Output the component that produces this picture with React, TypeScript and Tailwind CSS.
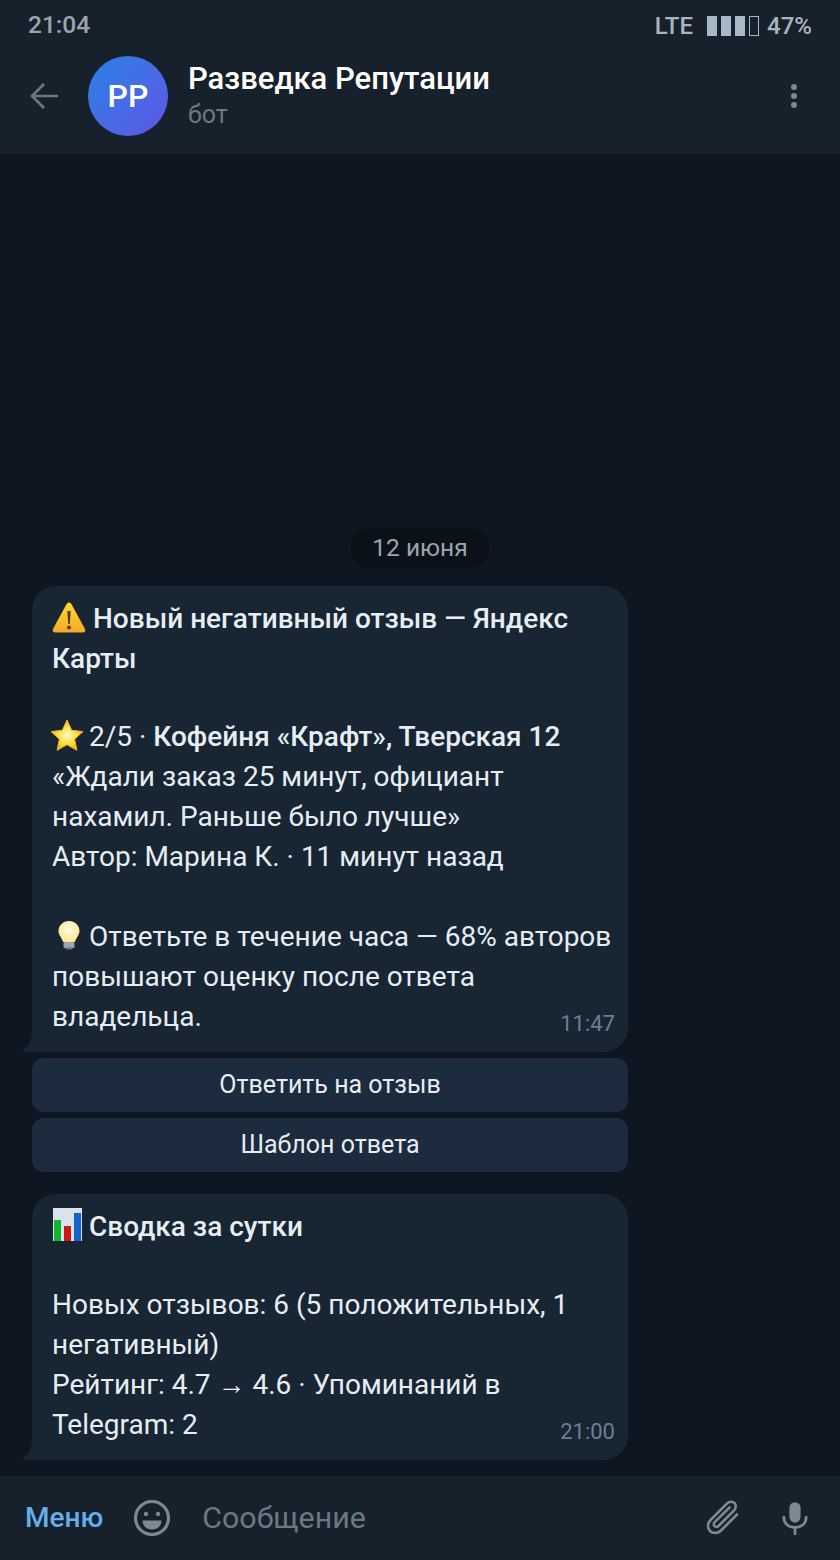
import React from "react";

const Warn = () => (
  <svg viewBox="0 0 34 32" className="inline-block w-[34px] h-[32px] align-[-5px] mr-[7px]">
    <defs>
      <linearGradient id="w" x1="0" y1="0" x2="0" y2="1">
        <stop offset="0" stopColor="#fdd835" />
        <stop offset="1" stopColor="#f9a825" />
      </linearGradient>
    </defs>
    <path d="M17 1.500c1 0 1.800.6 2.400 1.600l13.600 25c.9 1.800-.2 3.400-2 3.400H3c-1.800 0-2.900-1.600-2-3.400l13.600-25C15.200 2.100 16 1.500 17 1.500z" fill="url(#w)" />
    <path d="M15.400 10h3.200l-.8 13h-1.600z" fill="#4a3a1a" />
    <circle cx="17" cy="26.500" r="1.900" fill="#4a3a1a" />
  </svg>
);

const Star = () => (
  <svg viewBox="0 0 34 32" className="inline-block w-[34px] h-[32px] align-[-5px] ml-[-2px] mr-[5px]">
    <defs>
      <radialGradient id="s" cx="0.5" cy="0.5" r="0.6">
        <stop offset="0" stopColor="#fff9c4" />
        <stop offset="0.55" stopColor="#fdd835" />
        <stop offset="1" stopColor="#f59e0b" />
      </radialGradient>
    </defs>
    <path d="M17 1l4.700 10.300 11.300 1.300-8.400 7.600 2.300 11.100L17 25.700 7.100 31.300l2.300-11.100L1 12.600l11.300-1.300z" fill="url(#s)" stroke="#f9b020" strokeWidth="1" strokeLinejoin="round" />
  </svg>
);

const Bulb = () => (
  <svg viewBox="0 0 24 30" className="inline-block w-[24px] h-[30px] align-[-4px] ml-[5px] mr-[8px]">
    <defs>
      <radialGradient id="b" cx="0.5" cy="0.4" r="0.6">
        <stop offset="0" stopColor="#fffde7" />
        <stop offset="1" stopColor="#fde68a" />
      </radialGradient>
    </defs>
    <path d="M12 1C5.900 1 1.500 5.500 1.500 11c0 4.500 3.500 6.800 4.500 11h12c1-4.200 4.500-6.500 4.500-11C22.500 5.500 18.100 1 12 1z" fill="url(#b)" />
    <rect x="6.500" y="22" width="11" height="6" rx="1.500" fill="#9ca3af" />
    <rect x="8.500" y="27.500" width="7" height="2" rx="1" fill="#6b7280" />
  </svg>
);

const Chart = () => (
  <svg viewBox="0 0 29 33" className="inline-block w-[29px] h-[33px] align-[-5px] ml-[1px] mr-[7px]">
    <rect width="29" height="33" fill="#d9e4ea" />
    <rect x="1" y="12" width="7" height="21" fill="#12b52e" />
    <rect x="11" y="18" width="7" height="15" fill="#d11616" />
    <rect x="21" y="5" width="7" height="28" fill="#1565c8" />
  </svg>
);

const Tail = () => (
  <svg viewBox="0 0 14 18" className="absolute left-[-10px] bottom-0 w-[14px] h-[18px]">
    <path d="M14 0v18H2c-1.500 0-2-1-1-2C6 13 9 8 10 0z" fill="#182533" />
  </svg>
);

const Bubble = ({ time, children }: { time: string; children: React.ReactNode }) => (
  <div className="relative w-[596px] bg-[#182533] rounded-[24px] rounded-bl-none pt-[13px] pb-[15px] pl-[20px] pr-[16px] text-[28px] leading-[40px] text-[#e6edf3]">
    {children}
    <span className="absolute right-[13px] bottom-[15px] text-[22px] leading-[26px] text-[#6d7f8f]">{time}</span>
    <Tail />
  </div>
);

const KB = ({ children }: { children: React.ReactNode }) => (
  <div className="w-[596px] h-[54px] bg-[#1c2b3d] rounded-[12px] flex items-center justify-center text-[25px] text-[#e6edf3]">
    {children}
  </div>
);

export default function App() {
  return (
    <div className="w-[840px] h-[1560px] flex flex-col bg-[#0e1621] overflow-hidden font-['Roboto',sans-serif]">
      <header className="h-[154px] shrink-0 bg-[#17212b] flex flex-col">
        <div className="h-[50px] flex items-center justify-between pl-[28px] pr-[28px] pt-[1px] text-[24.500px] font-medium text-[#9aa5b1]">
          <span>21:04</span>
          <span className="flex items-center text-[24px] text-[#a9b4c0]">
            <span className="mr-[14px]">LTE</span>
            <span className="mr-[8px] flex gap-[4px]">
              <i className="block w-[10px] h-[20px] bg-[#a9b8c8]" />
              <i className="block w-[10px] h-[20px] bg-[#a9b8c8]" />
              <i className="block w-[10px] h-[20px] bg-[#a9b8c8]" />
              <i className="block w-[10px] h-[20px] border border-[#a9b8c8]" />
            </span>
            <span>47%</span>
          </span>
        </div>
        <div className="flex items-start pl-[30px] pr-[43px] pt-[6px]">
          <svg viewBox="0 0 28 28" className="w-[28px] h-[28px] mt-[26px] fill-none stroke-[#6c7883] stroke-[2.600]">
            <path d="M28 14H2M14 2L2 14l12 12" />
          </svg>
          <div className="ml-[30px] w-[80px] h-[80px] rounded-full bg-gradient-to-br from-[#1f80e5] to-[#5b55e6] flex items-center justify-center text-white text-[32px] font-medium">
            РР
          </div>
          <div className="ml-[20px] flex-1 pt-[4px]">
            <div className="text-[31px] leading-[38px] font-medium text-white">Разведка Репутации</div>
            <div className="text-[25px] leading-[34px] text-[#6c7883]">бот</div>
          </div>
          <div className="mt-[28px] flex flex-col gap-[3px]">
            <i className="block w-[6px] h-[6px] rounded-full bg-[#7d8893]" />
            <i className="block w-[6px] h-[6px] rounded-full bg-[#7d8893]" />
            <i className="block w-[6px] h-[6px] rounded-full bg-[#7d8893]" />
          </div>
        </div>
      </header>

      <main className="flex-1 flex flex-col justify-end pl-[32px] pb-[16px]">
        <div className="self-center -ml-[32px] h-[40px] px-[21px] rounded-full bg-[#0a1119] flex items-center text-[24.500px] text-[#9aa5b1] mb-[18px]">
          12 июня
        </div>
        <Bubble time="11:47">
          <div className="font-medium">
            <Warn />Новый негативный отзыв — Яндекс Карты
          </div>
          <div className="h-[38px]" />
          <div>
            <Star />2/5 · <span className="font-medium">Кофейня «Крафт», Тверская 12</span>
          </div>
          <div>«Ждали заказ 25 минут, официант нахамил. Раньше было лучше»</div>
          <div>Автор: Марина К. · 11 минут назад</div>
          <div className="h-[40px]" />
          <div>
            <Bulb />Ответьте в течение часа — 68% авторов повышают оценку после ответа владельца.
          </div>
        </Bubble>
        <div className="mt-[6px] flex flex-col gap-[6px]">
          <KB>Ответить на отзыв</KB>
          <KB>Шаблон ответа</KB>
        </div>
        <div className="mt-[22px]">
          <Bubble time="21:00">
            <div className="font-medium">
              <Chart />Сводка за сутки
            </div>
            <div className="h-[38px]" />
            <div>Новых отзывов: 6 (5 положительных, 1 негативный)</div>
            <div>Рейтинг: 4.7 → 4.6 · Упоминаний в Telegram: 2</div>
          </Bubble>
        </div>
      </main>

      <footer className="h-[84px] shrink-0 bg-[#17212b] flex items-center pl-[25px] pr-[32px]">
        <span className="text-[28px] font-medium text-[#64aeee]">Меню</span>
        <svg viewBox="0 0 38 38" className="ml-[30px] w-[38px] h-[38px] fill-none stroke-[#7d8893] stroke-[3.200]">
          <circle cx="19" cy="19" r="16.500" />
          <circle cx="13" cy="15" r="2.200" fill="#7d8893" stroke="none" />
          <circle cx="25" cy="15" r="2.200" fill="#7d8893" stroke="none" />
          <path d="M9.500 21.500h19c0 5.500-4 9-9.500 9s-9.500-3.500-9.500-9z" fill="#7d8893" stroke="none" />
        </svg>
        <span className="ml-[31px] flex-1 text-[30.400px] text-[#6c7883]">Сообщение</span>
        <svg viewBox="0 0 36 36" className="w-[36px] h-[36px] fill-none stroke-[#7d8893] stroke-[2.600] mr-[40px]">
          <path d="M31 14.500L15 30.500c-3.300 3.300-8.200 3.300-11 .5s-2.800-7.700.5-11L21 3.500c2.300-2.300 5.700-2.300 7.500-.5s1.800 5.200-.5 7.500L12.500 26c-1.200 1.200-3 1.200-4 .2s-1-2.800.2-4L23.500 7.500" strokeLinecap="round" />
        </svg>
        <svg viewBox="0 0 28 36" className="w-[26px] h-[34px] fill-none stroke-[#7d8893] stroke-[3]">
          <rect x="8" y="1" width="12" height="22" rx="6" fill="#7d8893" stroke="none" />
          <path d="M2 17c0 7 5 11 12 11s12-4 12-11M14 28v7" strokeLinecap="round" />
        </svg>
      </footer>
    </div>
  );
}
